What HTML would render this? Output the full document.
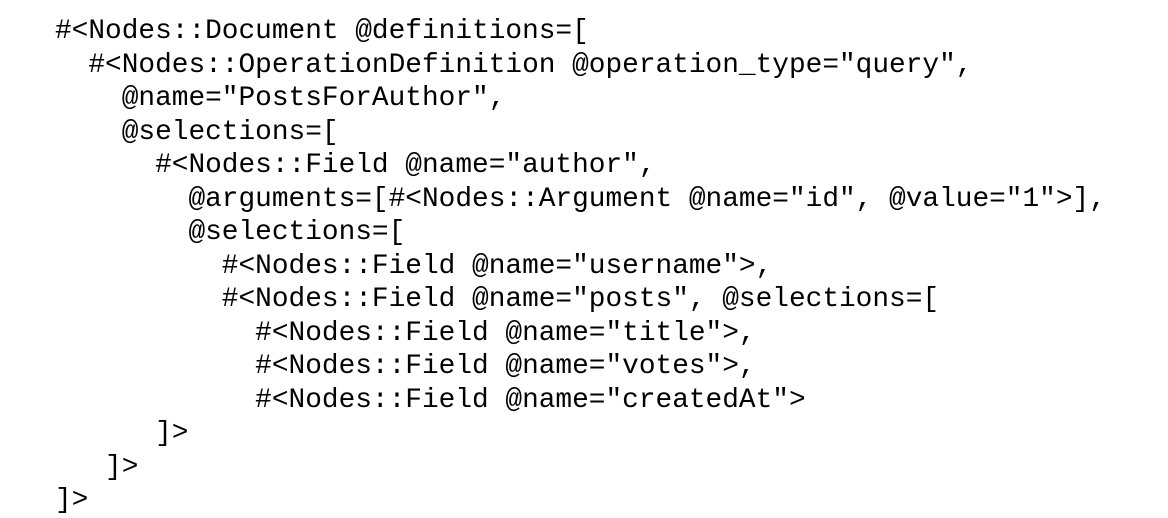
<!DOCTYPE html>
<html><head><style>
body{margin:0;background:#fff;width:1168px;height:518px;overflow:hidden}
pre{position:absolute;left:55px;top:15px;margin:0;font-family:"Liberation Mono",monospace;font-size:27.8px;line-height:33.5px;color:#000}
</style></head><body><pre>#&lt;Nodes::Document @definitions=[
  #&lt;Nodes::OperationDefinition @operation_type="query",
    @name="PostsForAuthor",
    @selections=[
      #&lt;Nodes::Field @name="author",
        @arguments=[#&lt;Nodes::Argument @name="id", @value="1"&gt;],
        @selections=[
          #&lt;Nodes::Field @name="username"&gt;,
          #&lt;Nodes::Field @name="posts", @selections=[
            #&lt;Nodes::Field @name="title"&gt;,
            #&lt;Nodes::Field @name="votes"&gt;,
            #&lt;Nodes::Field @name="createdAt"&gt;
      ]&gt;
   ]&gt;
]&gt;</pre></body></html>
